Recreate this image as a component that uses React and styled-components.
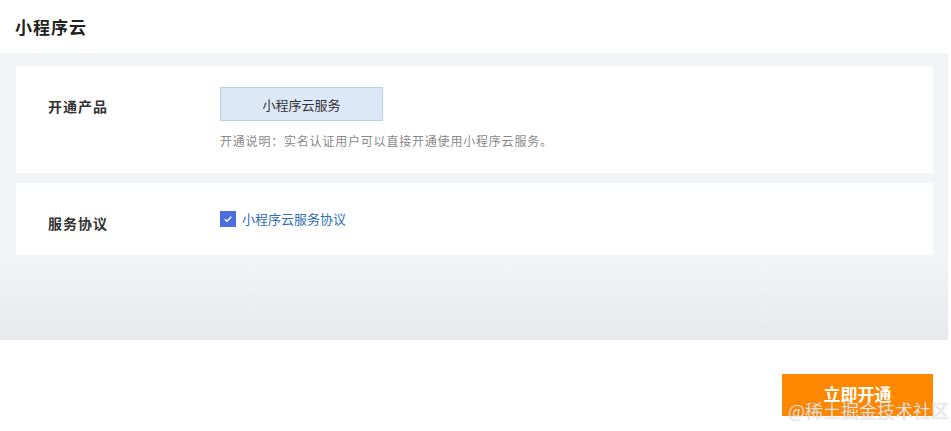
import React, { useState } from 'react';
import styled, { createGlobalStyle } from 'styled-components';

const GlobalStyle = createGlobalStyle`
  html, body {
    margin: 0;
    padding: 0;
    background: #fff;
    font-family: "Noto Sans CJK SC", "Noto Sans", "Liberation Sans", sans-serif;
    color: #333;
  }
`;

const Page = styled.div`
  width: 951px;
  height: 431px;
  display: flex;
  flex-direction: column;
  position: relative;
  overflow: hidden;
`;

const Header = styled.header`
  height: 53px;
  display: flex;
  align-items: center;
  padding: 0 15px;
  h1 {
    margin: 0;
    font-size: 17px;
    font-weight: 700;
    color: #222;
    letter-spacing: 1px;
  }
`;

const Body = styled.main`
  height: 287px;
  margin-right: 3px;
  padding: 13px 15px 0 16px;
  box-sizing: border-box;
  display: flex;
  flex-direction: column;
  gap: 10px;
  background: linear-gradient(#f3f4f6 0%, #f3f4f6 70%, #e8e9ec 100%);
`;

const Card = styled.section`
  background: #fff;
  height: ${(p) => p.h}px;
  box-sizing: border-box;
  display: grid;
  grid-template-columns: 172px 1fr;
  padding: ${(p) => p.pt}px 32px 0;
`;

const Label = styled.div`
  font-size: 14px;
  letter-spacing: 1px;
  font-weight: 700;
  color: #333;
  padding-top: ${(p) => p.pt}px;
`;

const Field = styled.div`
  display: flex;
  flex-direction: column;
  align-items: flex-start;
`;

const ProductBox = styled.div`
  width: 163px;
  height: 34px;
  box-sizing: border-box;
  background: #dce7f7;
  border: 1px solid #b9cde6;
  display: flex;
  align-items: center;
  justify-content: center;
  font-size: 13px;
  color: #333;
`;

const Hint = styled.p`
  margin: 11px 0 0;
  font-size: 12px;
  letter-spacing: 0.8px;
  color: #888;
`;

const Agree = styled.label`
  display: flex;
  align-items: center;
  gap: 6px;
  font-size: 13px;
  color: #2f6db5;
  cursor: pointer;
`;

const Check = styled.span`
  width: 16px;
  height: 16px;
  background: ${(p) => (p.on ? '#4c6ee0' : '#fff')};
  border: 1px solid ${(p) => (p.on ? '#4c6ee0' : '#ccc')};
  box-sizing: border-box;
  display: flex;
  align-items: center;
  justify-content: center;
`;

const Footer = styled.footer`
  flex: 1;
  display: flex;
  justify-content: flex-end;
  padding: 34px 18px 0 0;
`;

const SubmitButton = styled.button`
  width: 151px;
  height: 42px;
  padding: 0 0 3px;
  border: none;
  background: #ff8800;
  color: #fff;
  font-size: 17px;
  font-weight: 700;
  font-family: inherit;
  cursor: pointer;
`;

const Watermark = styled.div`
  position: absolute;
  right: 2px;
  bottom: 8px;
  font-family: "Noto Sans CJK SC", "Liberation Serif", serif;
  font-size: 18px;
  color: rgba(255, 255, 255, 0.75);
  text-shadow: 0 0 1px rgba(120, 120, 120, 0.6);
  pointer-events: none;
`;

const App = () => {
  const [agreed, setAgreed] = useState(true);

  return (
    <Page>
      <GlobalStyle />
      <Header>
        <h1>小程序云</h1>
      </Header>
      <Body>
        <Card h={107} pt={21}>
          <Label pt={9}>开通产品</Label>
          <Field>
            <ProductBox>小程序云服务</ProductBox>
            <Hint>开通说明：实名认证用户可以直接开通使用小程序云服务。</Hint>
          </Field>
        </Card>
        <Card h={72} pt={26}>
          <Label pt={4}>服务协议</Label>
          <Field>
            <Agree onClick={() => setAgreed(!agreed)}>
              <Check on={agreed}>
                {agreed && (
                  <svg width="10" height="10" viewBox="0 0 10 10">
                    <path d="M1.8 5.2 L4 7.3 L8.3 2.8" stroke="#fff" strokeWidth="1.5" fill="none" />
                  </svg>
                )}
              </Check>
              小程序云服务协议
            </Agree>
          </Field>
        </Card>
      </Body>
      <Footer>
        <SubmitButton>立即开通</SubmitButton>
      </Footer>
      <Watermark>@稀土掘金技术社区</Watermark>
    </Page>
  );
};

export default App;
